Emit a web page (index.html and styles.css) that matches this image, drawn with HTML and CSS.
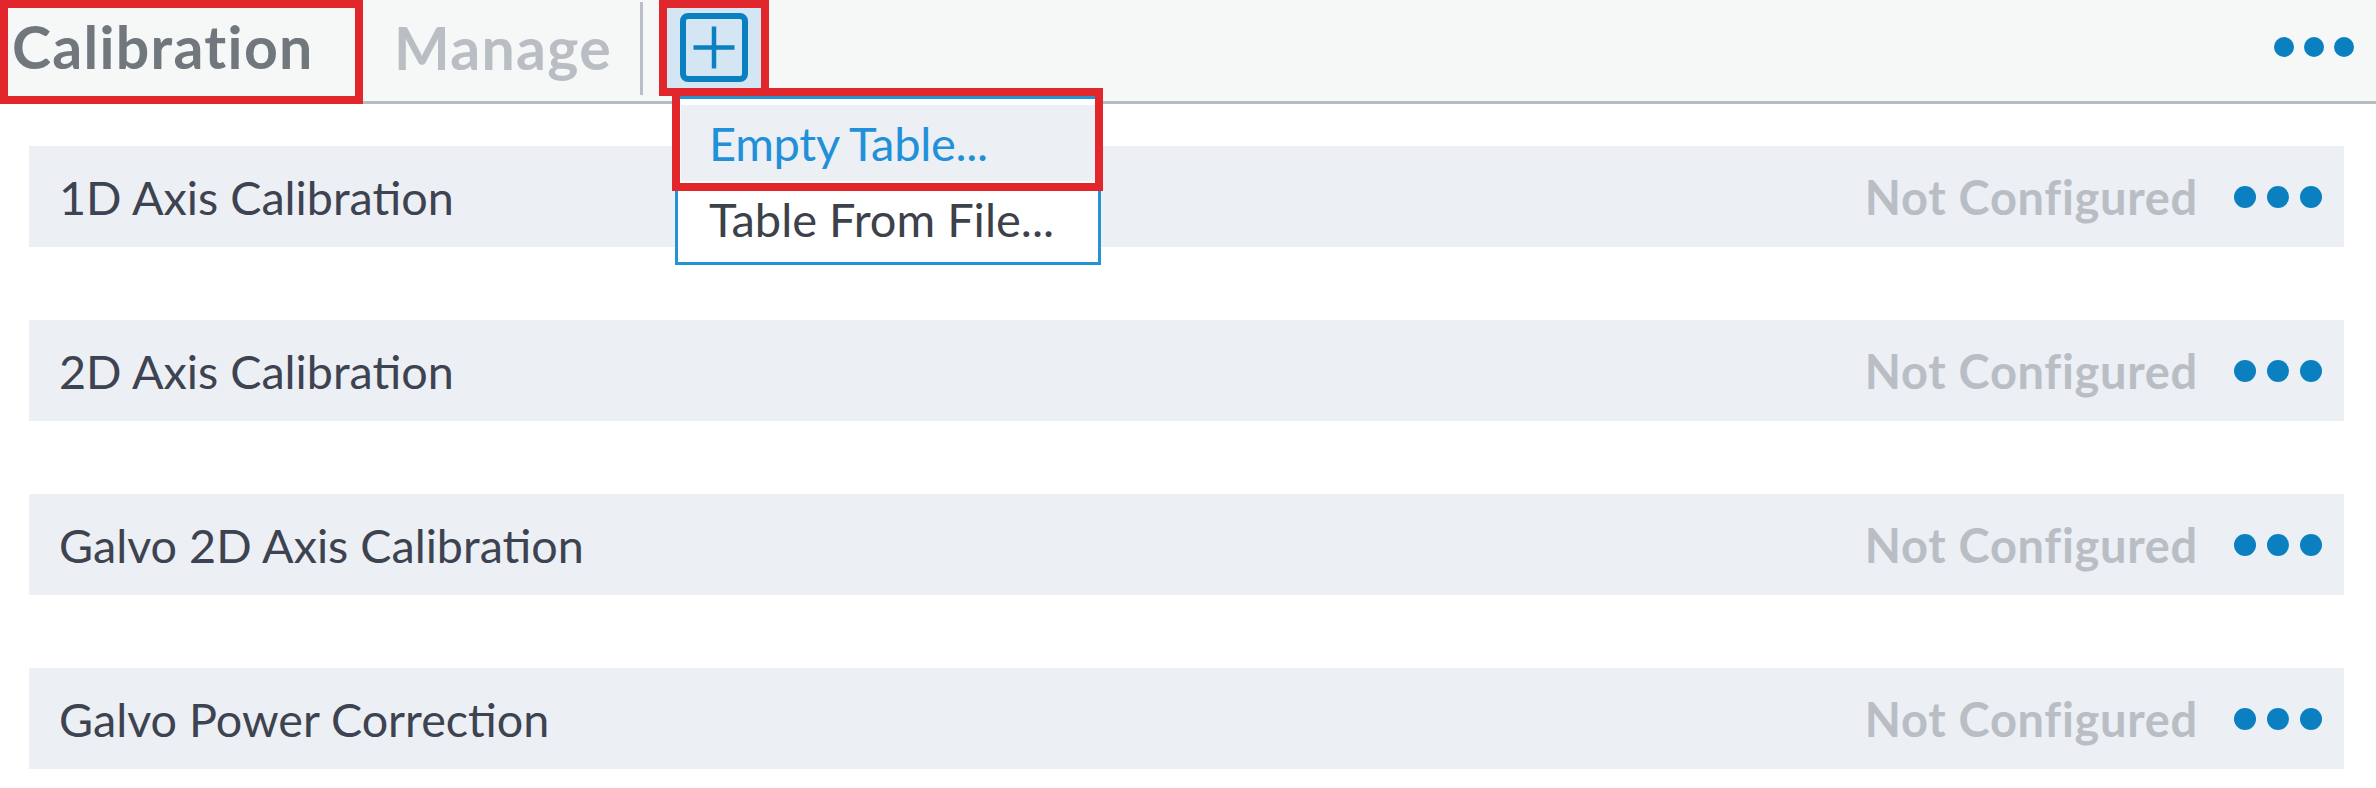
FILE: index.html
```html
<!DOCTYPE html>
<html lang="en">
<head>
<meta charset="utf-8">
<title>Calibration</title>
<link rel="stylesheet" href="styles.css">
</head>
<body>
<div class="app">
  <header class="tabbar">
    <div class="tab tab-active">Calibration</div>
    <div class="tab tab-muted">Manage</div>
    <div class="tab-sep"></div>
    <div class="add-wrap">
      <button class="add-btn" type="button" aria-label="Add">
        <svg class="add-icon" width="68" height="69" viewBox="0 0 68 69">
          <rect x="3" y="3" width="62" height="63" rx="5" ry="5" fill="none" stroke="#0a80c1" stroke-width="6"/>
          <path d="M34 13.5 V55.5 M13.5 34.5 H54.5" stroke="#0a80c1" stroke-width="4.5" fill="none"/>
        </svg>
      </button>
      <div class="menu">
        <div class="menu-item menu-item-hover">Empty Table...</div>
        <div class="menu-item">Table From File...</div>
        <div class="mark-item"></div>
      </div>
    </div>
    <div class="more more-header"><span></span><span></span><span></span></div>
  </header>
  <main class="list">
    <div class="row">
      <span class="row-title">1D Axis Calibration</span>
      <span class="row-status">Not Configured</span>
      <span class="more more-row"><span></span><span></span><span></span></span>
    </div>
    <div class="row">
      <span class="row-title">2D Axis Calibration</span>
      <span class="row-status">Not Configured</span>
      <span class="more more-row"><span></span><span></span><span></span></span>
    </div>
    <div class="row">
      <span class="row-title">Galvo 2D Axis Calibration</span>
      <span class="row-status">Not Configured</span>
      <span class="more more-row"><span></span><span></span><span></span></span>
    </div>
    <div class="row">
      <span class="row-title">Galvo Power Correction</span>
      <span class="row-status">Not Configured</span>
      <span class="more more-row"><span></span><span></span><span></span></span>
    </div>
  </main>
</div>
</body>
</html>
```
FILE: styles.css
```css
* { box-sizing: border-box; }

html, body {
  margin: 0;
  padding: 0;
  background: #ffffff;
  overflow: hidden;
}

body {
  font-family: Lato, "Noto Sans", "Liberation Sans", sans-serif;
  width: 2376px;
  height: 788px;
}

.tabbar {
  display: flex;
  align-items: flex-start;
  height: 104px;
  background: #f6f7f7;
  border-bottom: 3px solid #b6bcc4;
  position: relative;
  z-index: 2;
}

.tab {
  font-size: 59px;
  font-weight: 700;
  line-height: 59px;
  letter-spacing: 1.3px;
  white-space: nowrap;
}

.tab-active {
  width: 363px;
  height: 104px;
  border: 8px solid #e1262c;
  padding: 9px 0 0 4px;
  color: #70777d;
}

.tab-muted {
  padding: 18px 28px 0 31px;
  color: #b9bec4;
}

.tab-sep {
  width: 3px;
  height: 93px;
  margin-top: 2px;
  background: #b9bfc6;
}

.add-wrap {
  position: relative;
  margin-left: 16px;
}

.add-btn {
  display: flex;
  align-items: center;
  justify-content: center;
  width: 110px;
  height: 96px;
  margin: 0;
  padding: 0 0 1px 0;
  border: 8px solid #e1262c;
  background: #d4e5f4;
}

.add-icon { display: block; }

.menu {
  position: absolute;
  left: 16px;
  top: 96px;
  width: 426px;
  padding: 6px 3px 5px 3px;
  background: #ffffff;
  border: 3px solid #2592d2;
}

.menu-item {
  height: 76px;
  display: flex;
  align-items: center;
  padding-left: 28px;
  font-size: 47px;
  color: #3c414a;
  white-space: nowrap;
}

.menu-item-hover {
  background: #eceff3;
  color: #2190d9;
  letter-spacing: -0.3px;
}

.mark-item {
  position: absolute;
  left: -6px;
  top: -11px;
  width: 431px;
  height: 103px;
  border: 8px solid #e1262c;
}

.more {
  display: flex;
}

.more span {
  display: block;
  border-radius: 50%;
  background: #0a80c1;
}

.more-header {
  margin-left: auto;
  margin-right: 22px;
  margin-top: 37px;
  gap: 10px;
}

.more-header span {
  width: 20px;
  height: 20px;
}

.list {
  display: flex;
  flex-direction: column;
  gap: 73px;
  padding: 42px 32px 0 29px;
}

.row {
  display: flex;
  align-items: center;
  height: 101px;
  padding: 0 22px 0 30px;
  background: #eceff3;
}

.row-title {
  flex: 1;
  font-size: 46.7px;
  color: #3d4350;
  white-space: nowrap;
}

.row-status {
  font-size: 47px;
  font-weight: 700;
  letter-spacing: 0.7px;
  color: #b9bec5;
  margin-right: 36px;
  white-space: nowrap;
}

.more-row {
  gap: 11px;
}

.more-row span {
  width: 22px;
  height: 22px;
}
```
